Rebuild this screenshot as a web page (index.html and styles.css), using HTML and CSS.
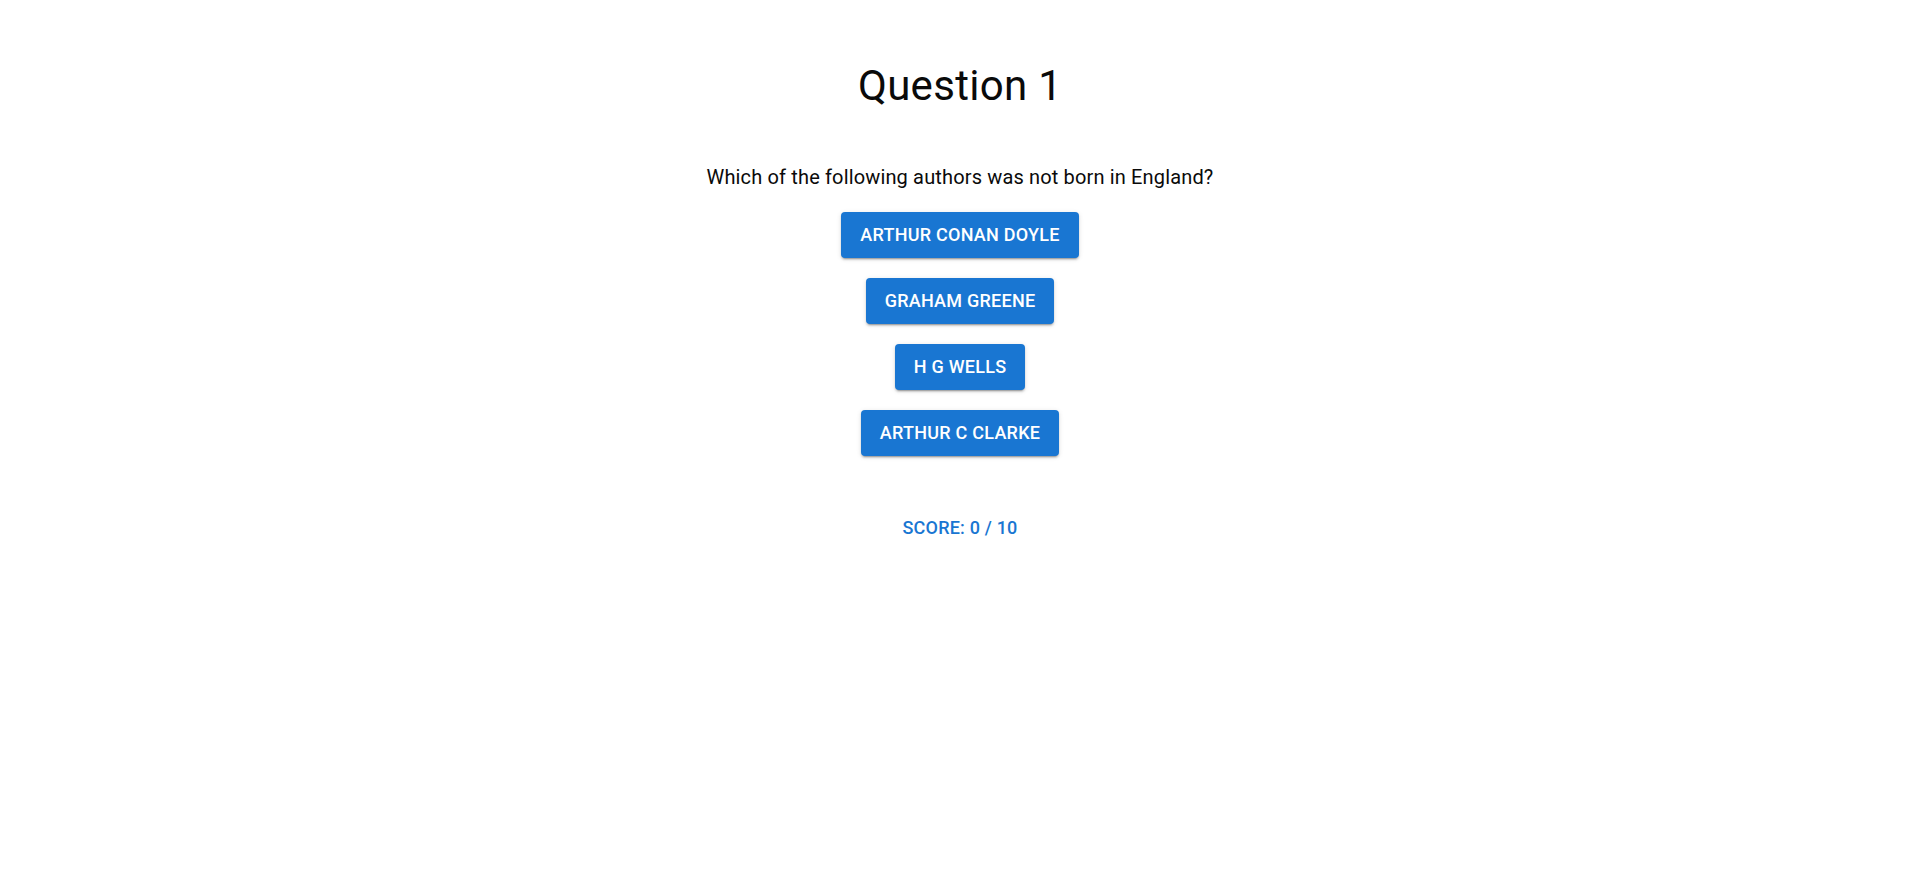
FILE: index.html
```html
<!DOCTYPE html>
<html lang="en">
<head>
<meta charset="utf-8">
<title>Quiz</title>
<link rel="stylesheet" href="styles.css">
</head>
<body>
<main class="quiz">
  <h1 class="quiz-title">Question 1</h1>
  <p class="quiz-question">Which of the following authors was not born in England?</p>
  <div class="answers">
    <button class="answer-btn">Arthur Conan Doyle</button>
    <button class="answer-btn">Graham Greene</button>
    <button class="answer-btn">H G Wells</button>
    <button class="answer-btn">Arthur C Clarke</button>
  </div>
  <button class="score-btn">Score: 0 / 10</button>
</main>
</body>
</html>
```
FILE: styles.css
```css
html, body {
  margin: 0;
  padding: 0;
  background: #fff;
}
body {
  font-family: Roboto, "Liberation Sans", Arial, sans-serif;
  color: #0a0a0a;
}
.quiz {
  display: flex;
  flex-direction: column;
  align-items: center;
  padding-top: 60px;
}
.quiz-title {
  margin: 0;
  font-size: 42px;
  font-weight: 400;
  line-height: 52px;
  letter-spacing: 0.3px;
}
.quiz-question {
  margin: 50px 0 0;
  font-size: 20px;
  line-height: 30px;
  letter-spacing: 0.15px;
}
.answers {
  display: flex;
  flex-direction: column;
  align-items: center;
  gap: 20px;
  margin-top: 20px;
}
.answer-btn {
  font-family: inherit;
  font-size: 18px;
  font-weight: 500;
  line-height: 30px;
  letter-spacing: 0.25px;
  text-transform: uppercase;
  color: #fff;
  background: #1976d2;
  border: 0;
  border-radius: 4px;
  padding: 8px 19px;
  box-shadow: 0px 3px 1px -2px rgba(0,0,0,0.2), 0px 2px 2px 0px rgba(0,0,0,0.14), 0px 1px 5px 0px rgba(0,0,0,0.12);
  cursor: pointer;
}
.score-btn {
  margin-top: 51px;
  font-family: inherit;
  font-size: 18px;
  font-weight: 500;
  line-height: 30px;
  letter-spacing: 0.2px;
  text-transform: uppercase;
  color: #1976d2;
  background: transparent;
  border: 0;
  border-radius: 4px;
  padding: 6px 8px;
  cursor: pointer;
}
```
